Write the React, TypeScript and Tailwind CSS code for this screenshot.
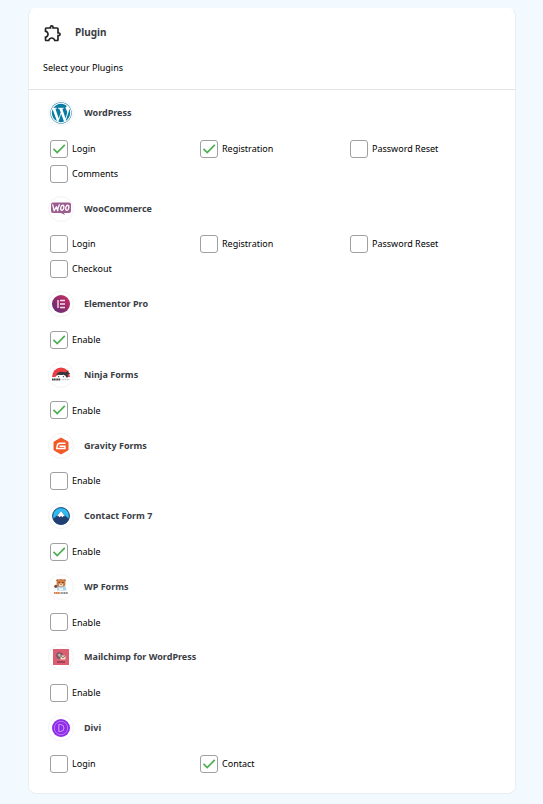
import type { ReactNode } from "react";
import { FaWordpress } from "react-icons/fa";

type Option = { label: string; checked?: boolean };
type Plugin = { name: string; icon: ReactNode; options: Option[] };

function WooIcon() {
  return (
    <svg viewBox="0 0 20 13" className="w-5">
      <path d="M2 .5h16a2 2 0 0 1 2 2V9a2 2 0 0 1-2 2h-5l1 2-4-2H2a2 2 0 0 1-2-2V2.500a2 2 0 0 1 2-2z" fill="#9b5c8f" />
      <path d="M1.700 2.800 3.200 8.800 5.400 4.800 6.700 8.800Q7 5 8.300 2.800" fill="none" stroke="#fff" strokeWidth="1.300" strokeLinejoin="round" strokeLinecap="round" />
      <ellipse cx="11.300" cy="5.800" rx="1.500" ry="2.600" transform="rotate(12 11.300 5.800)" fill="none" stroke="#fff" strokeWidth="1.300" />
      <ellipse cx="16.300" cy="5.800" rx="1.500" ry="2.600" transform="rotate(12 16.300 5.800)" fill="none" stroke="#fff" strokeWidth="1.300" />
    </svg>
  );
}

function ElementorIcon() {
  return (
    <svg viewBox="0 0 18 18" className="w-[18px]">
      <defs>
        <linearGradient id="elementor" x1="1" y1="0" x2="0" y2="1">
          <stop offset="0" stopColor="#d02c60" />
          <stop offset="1" stopColor="#582c78" />
        </linearGradient>
      </defs>
      <circle cx="9" cy="9" r="9" fill="url(#elementor)" />
      <path d="M6 5v8M8 5.500h5M8 9h5M8 12.500h5" stroke="#f6dfea" strokeWidth="1.400" />
    </svg>
  );
}

function NinjaIcon() {
  return (
    <svg viewBox="0 0 20 16" className="w-5">
      <path d="M1 10a9 9.500 0 0 1 18 0z" fill="#ea3e42" />
      <path d="M5 10.500C5 7 7 5 10 4.800c1.800 0 3.300.2 4.500.8L17.500 3.500l-.3 2 2.300 1.200-3 .9c.3 1 .4 1.900.4 2.900z" fill="#35363a" />
      <path d="M4 11Q4.500 8.300 7.500 7.800q2.500.4 5 0 2.500.5 3 3.200z" fill="#fff" />
      <path d="M7 9.700h1.200M11.800 9.700H13" stroke="#35363a" strokeWidth="1" />
      <path d="M1 12.500h8.500" stroke="#444" strokeWidth="2" strokeDasharray="1.400 .3" />
      <path d="M10.500 12.500H19" stroke="#c4c4c6" strokeWidth="1.600" strokeDasharray="1.200 .5" />
    </svg>
  );
}

function GravityIcon() {
  return (
    <svg viewBox="0 0 16 18" className="w-4">
      <path d="M8 1 15 5v8l-7 4-7-4V5z" fill="#f15a29" stroke="#f15a29" strokeLinejoin="round" />
      <path d="M12.500 6.300H7q-2.200 0-2.700 2.200l-.6 3h8.300V9.200H6.500" fill="none" stroke="#fff" strokeWidth="1.400" />
    </svg>
  );
}

function ContactIcon() {
  return (
    <svg viewBox="0 0 18 18" className="w-[18px]">
      <circle cx="9" cy="9" r="8.500" fill="#2fbdf1" />
      <path d="M1 12 5.500 8 9 4l3.500 4 4.500 4A8.500 8.500 0 0 1 1 12z" fill="#213f72" />
      <path d="m9 4 4 5.300-1.500-.3-1 1.300L9 9l-1.500 1.300-1-1.300-1.500.3z" fill="#fff" />
      <circle cx="9" cy="9" r="8.400" fill="none" stroke="#1f4377" strokeWidth="1" />
    </svg>
  );
}

function WPFormsIcon() {
  return (
    <svg viewBox="0 0 16 18" className="w-4">
      <circle cx="4.500" cy="2.500" r="1.300" fill="#a65c35" />
      <circle cx="11.500" cy="2.500" r="1.300" fill="#a65c35" />
      <path d="M3.500 6q0-5 4.500-5t4.500 5q0 3.500-4.500 3.500T3.500 6z" fill="#d17c43" />
      <path d="M6 6q2-1.500 4 0v1.500q-2 1.300-4 0z" fill="#f7e3cf" />
      <path d="M5.500 4.500h1.200M9.300 4.500h1.200M7.400 6.300h1.200" stroke="#4b3027" />
      <path d="M4 8.500h8.500l1 4H4z" fill="#a9d3ec" />
      <path d="M6 9.500q2 1.500 4 0v2.500H6z" fill="#eef6fa" />
      <circle cx="2.800" cy="8.300" r="1.600" fill="#7d4a35" />
      <path d="M1 15h6" stroke="#e07d45" strokeWidth="2" strokeDasharray="1.600 .3" />
      <path d="M7.500 15H15" stroke="#8b8f96" strokeWidth="2" strokeDasharray="1.300 .4" />
    </svg>
  );
}

function MailchimpIcon() {
  return (
    <svg viewBox="0 0 16 16" className="w-4">
      <path d="M0 0h16v16H0z" fill="#dc5c72" />
      <circle cx="6.500" cy="6.500" r="3.200" fill="#6d5b63" />
      <path d="M4.500 5.500 7 4.500l1 2-2 1.500z" fill="#c6b8b6" />
      <path d="M7.500 6.500h5v4h-5z" fill="#eee0c4" />
      <path d="m7.500 6.500 2.500 2.300 2.500-2.300" fill="none" stroke="#6e4a4d" strokeWidth=".8" />
      <path d="M4 13h8" stroke="#7a3545" strokeWidth="1.200" />
    </svg>
  );
}

function DiviIcon() {
  return (
    <svg viewBox="0 0 18 18" className="w-[18px]">
      <circle cx="9" cy="9" r="9" fill="#8f2ce8" />
      <circle cx="9" cy="9" r="6.700" fill="none" stroke="#c48df5" strokeWidth=".8" />
      <path d="M6.800 5.500h1.700a3.500 3.500 0 0 1 0 7H6.800z" fill="none" stroke="#cfa3f7" strokeWidth="1" />
    </svg>
  );
}

const plugins: Plugin[] = [
  {
    name: "WordPress",
    icon: <FaWordpress size={22} color="#0a7aa3" />,
    options: [{ label: "Login", checked: true }, { label: "Registration", checked: true }, { label: "Password Reset" }, { label: "Comments" }],
  },
  {
    name: "WooCommerce",
    icon: <WooIcon />,
    options: [{ label: "Login" }, { label: "Registration" }, { label: "Password Reset" }, { label: "Checkout" }],
  },
  { name: "Elementor Pro", icon: <ElementorIcon />, options: [{ label: "Enable", checked: true }] },
  { name: "Ninja Forms", icon: <NinjaIcon />, options: [{ label: "Enable", checked: true }] },
  { name: "Gravity Forms", icon: <GravityIcon />, options: [{ label: "Enable" }] },
  { name: "Contact Form 7", icon: <ContactIcon />, options: [{ label: "Enable", checked: true }] },
  { name: "WP Forms", icon: <WPFormsIcon />, options: [{ label: "Enable" }] },
  { name: "Mailchimp for WordPress", icon: <MailchimpIcon />, options: [{ label: "Enable" }] },
  { name: "Divi", icon: <DiviIcon />, options: [{ label: "Login" }, { label: "Contact", checked: true }] },
];

function Checkbox({ label, checked }: Option) {
  return (
    <label className="flex h-[25px] items-center gap-1 text-[9px] text-black">
      <span className="grid">
        <input
          type="checkbox"
          defaultChecked={checked}
          className="peer col-start-1 row-start-1 size-[18px] appearance-none rounded-[3px] border border-[#a0a0a4] bg-white"
        />
        <svg viewBox="0 0 18 18" className="pointer-events-none invisible col-start-1 row-start-1 size-[18px] peer-checked:visible">
          <path d="m3.500 8.800 3.700 3.700 7.600-7.600" fill="none" stroke="#4caf50" strokeWidth="1.700" />
        </svg>
      </span>
      {label}
    </label>
  );
}

export default function App() {
  return (
    <main className="flex min-h-screen flex-col bg-[#f2faff] pt-2 pr-[27px] pb-[10px] pl-7 font-['Noto_Sans','Open_Sans',sans-serif]">
      <section className="flex flex-1 flex-col rounded-lg border border-[#e8eff3] border-t-white bg-white">
        <header className="border-b border-[#e0e2e4] px-[14px] pt-[14px] pb-[13px]">
          <div className="flex items-center gap-3">
            <svg viewBox="0 0 24 24" className="size-5" fill="#222">
              <path d="M10.500 4.500c.28 0 .5.220.5.500v2h6v6h2c.28 0 .5.220.5.500s-.220.500-.5.500h-2v6h-2.120c-.68-1.750-2.390-3-4.380-3s-3.700 1.250-4.380 3H4v-2.120c1.750-.68 3-2.390 3-4.380 0-1.990-1.240-3.700-2.990-4.380L4 7h6V5c0-.28.220-.5.500-.5m0-2C9.120 2.500 8 3.620 8 5H4c-1.100 0-1.990.9-1.990 2v3.800h.29c1.490 0 2.700 1.210 2.700 2.700s-1.210 2.700-2.700 2.700H2V20c0 1.100.9 2 2 2h3.800v-.3c0-1.490 1.210-2.700 2.700-2.700s2.700 1.210 2.700 2.700v.3H17c1.100 0 2-.9 2-2v-4c1.380 0 2.500-1.120 2.500-2.500S20.380 11 19 11V7c0-1.100-.9-2-2-2h-4c0-1.380-1.120-2.500-2.500-2.500z" />
            </svg>
            <h1 className="pb-[2px] text-[10px] leading-4 font-bold text-[#3a3d44]">Plugin</h1>
          </div>
          <p className="mt-[17px] text-[9px] leading-4 text-black">Select your Plugins</p>
        </header>
        <div className="flex flex-1 flex-col justify-between pt-[10px] pb-[9px]">
          {plugins.map((plugin) => (
            <section key={plugin.name} className="pr-[15px] pb-2 pl-[19px]">
              <div className="flex items-center gap-[10px]">
                <span className="grid size-[26px] place-items-center rounded-full border border-[#f3f3f5]">{plugin.icon}</span>
                <h2 className="text-[9px] leading-4 font-bold text-[#3a3d44]">{plugin.name}</h2>
              </div>
              <div className="mt-[10px] grid grid-cols-3 pl-[2px]">
                {plugin.options.map((option) => (
                  <Checkbox key={option.label} {...option} />
                ))}
              </div>
            </section>
          ))}
        </div>
      </section>
    </main>
  );
}
